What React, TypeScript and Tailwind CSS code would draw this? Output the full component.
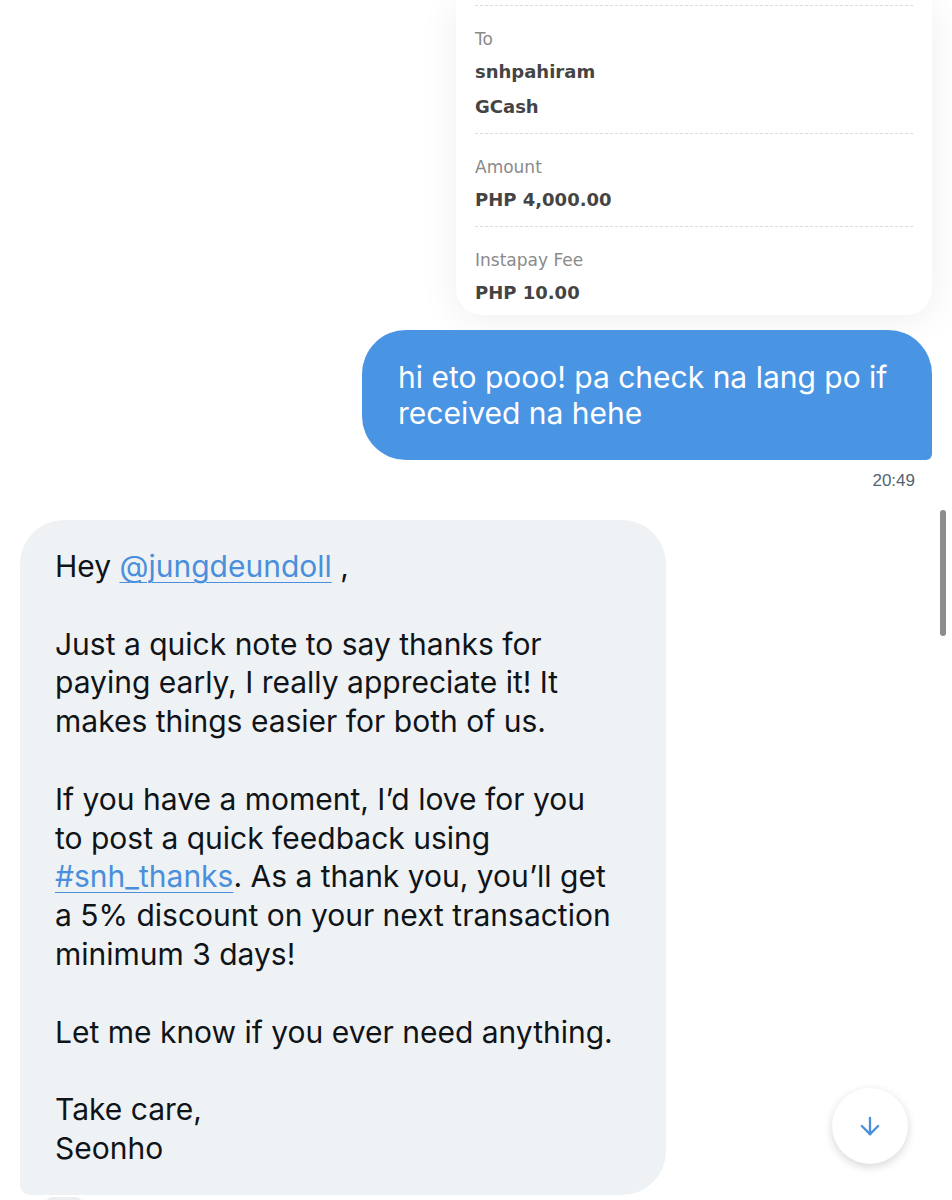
import { ArrowDown } from 'lucide-react';

const receipt = [
  { label: 'To', values: ['snhpahiram', 'GCash'], pb: 'pb-[14px]' },
  { label: 'Amount', values: ['PHP 4,000.00'], pb: 'pb-[14px]' },
  { label: 'Instapay Fee', values: ['PHP 10.00'], pb: 'pb-[10px]' },
];

const App = () => {
  return (
    <div
      className="relative w-[952px] h-[1200px] overflow-hidden bg-white"
      style={{ fontFamily: 'Inter, "Liberation Sans", sans-serif' }}
    >
      {/* sent side */}
      <div className="flex flex-col items-end pr-[20px]">
        <div className="w-[570px] h-[328px] flex justify-end items-start">
          <div
            className="w-[476px] bg-white rounded-b-[26px] shadow-[0_4px_40px_rgba(0,0,0,0.07)] px-[19px] pt-[5px]"
            style={{ fontFamily: '"DejaVu Sans", "Liberation Sans", sans-serif' }}
          >
            {receipt.map((row, idx) => (
              <div
                key={idx}
                className={`border-t border-dashed border-[#dcdcdc] pt-[21px] ${row.pb}`}
              >
                <div className="text-[17px] leading-[24px] text-[#8a8a8a]">
                  {row.label}
                </div>
                {row.values.map((v, i) => (
                  <div
                    key={i}
                    className={`text-[18px] leading-[24px] font-bold text-[#444444] ${
                      i === 0 ? 'mt-[9px]' : 'mt-[11px]'
                    }`}
                  >
                    {v}
                  </div>
                ))}
              </div>
            ))}
          </div>
        </div>
        <div className="mt-[2px] w-[570px] h-[130px] rounded-[44px] rounded-br-[6px] bg-[#4a94e4] px-[36px] pt-[29px] text-white text-[30px] leading-[36px]">
          hi eto pooo! pa check na lang po if
          <br />
          received na hehe
        </div>
        <div
          className="mt-[9px] pr-[17px] text-[17px] leading-[24px] text-[#536471]"
          style={{ fontFamily: '"Liberation Sans", Arial, sans-serif' }}
        >
          20:49
        </div>
      </div>

      {/* received side */}
      <div className="mt-[27px] ml-[20px] w-[646px] rounded-[44px] rounded-bl-[10px] bg-[#eff2f4] px-[35px] pt-[27px] pb-[27px] text-[30px] leading-[38.8px] text-[#0f1419]">
        Hey{' '}
        <span className="text-[#4a8fdc] underline underline-offset-[5px] decoration-1">
          @jungdeundoll
        </span>{' '}
        ,
        <br />
        <br />
        Just a quick note to say thanks for
        <br />
        paying early, I really appreciate it! It
        <br />
        makes things easier for both of us.
        <br />
        <br />
        If you have a moment, I’d love for you
        <br />
        to post a quick feedback using
        <br />
        <span className="text-[#4a8fdc] underline underline-offset-[5px] decoration-1">
          #snh_thanks
        </span>
        . As a thank you, you’ll get
        <br />
        a 5% discount on your next transaction
        <br />
        minimum 3 days!
        <br />
        <br />
        Let me know if you ever need anything.
        <br />
        <br />
        Take care,
        <br />
        Seonho
      </div>
      <div className="ml-[46px] mt-[2px] w-[36px] h-[8px] rounded-t-[6px] bg-[#eceff1]"></div>

      {/* scrollbar */}
      <div className="absolute left-[940px] top-[510px] w-[6px] h-[126px] rounded-full bg-[#8c8c8c]"></div>

      {/* scroll down button */}
      <div className="absolute left-[832px] top-[1088px] w-[76px] h-[76px] rounded-full bg-white shadow-[0_3px_10px_rgba(0,0,0,0.16)] flex items-center justify-center">
        <ArrowDown size={28} strokeWidth={2} color="#4a8fdc" />
      </div>
    </div>
  );
};

export default App;
